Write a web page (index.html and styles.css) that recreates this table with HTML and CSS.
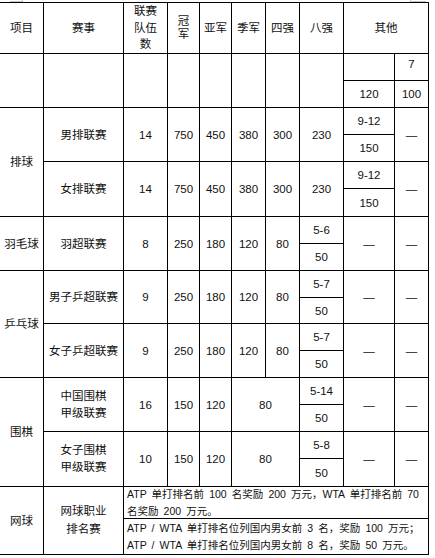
FILE: index.html
```html
<!DOCTYPE html>
<html lang="zh-CN">
<head>
<meta charset="utf-8">
<title>奖励标准</title>
<link rel="stylesheet" href="styles.css">
</head>
<body>
<div class="page">
  <span class="mark mark-tl"></span>
  <span class="mark mark-tr"></span>
  <div class="grid">
    <div class="cell">项目</div>
    <div class="cell">赛事</div>
    <div class="cell ml">联赛<br>队伍<br>数</div>
    <div class="cell tight">冠<br>军</div>
    <div class="cell">亚军</div>
    <div class="cell">季军</div>
    <div class="cell">四强</div>
    <div class="cell">八强</div>
    <div class="cell c2">其他</div>

    <div class="cell r2"></div>
    <div class="cell r2"></div>
    <div class="cell r2"></div>
    <div class="cell r2"></div>
    <div class="cell r2"></div>
    <div class="cell r2"></div>
    <div class="cell r2"></div>
    <div class="cell r2"></div>
    <div class="cell"></div>
    <div class="cell up">7</div>
    <div class="cell">120</div>
    <div class="cell">100</div>

    <div class="cell r4">排球</div>
    <div class="cell r2">男排联赛</div>
    <div class="cell r2">14</div>
    <div class="cell r2">750</div>
    <div class="cell r2">450</div>
    <div class="cell r2">380</div>
    <div class="cell r2">300</div>
    <div class="cell r2">230</div>
    <div class="cell">9-12</div>
    <div class="cell r2">—</div>
    <div class="cell">150</div>

    <div class="cell r2">女排联赛</div>
    <div class="cell r2">14</div>
    <div class="cell r2">750</div>
    <div class="cell r2">450</div>
    <div class="cell r2">380</div>
    <div class="cell r2">300</div>
    <div class="cell r2">230</div>
    <div class="cell">9-12</div>
    <div class="cell r2">—</div>
    <div class="cell">150</div>

    <div class="cell r2">羽毛球</div>
    <div class="cell r2">羽超联赛</div>
    <div class="cell r2">8</div>
    <div class="cell r2">250</div>
    <div class="cell r2">180</div>
    <div class="cell r2">120</div>
    <div class="cell r2">80</div>
    <div class="cell">5-6</div>
    <div class="cell r2">—</div>
    <div class="cell r2">—</div>
    <div class="cell">50</div>

    <div class="cell r4">乒乓球</div>
    <div class="cell r2">男子乒超联赛</div>
    <div class="cell r2">9</div>
    <div class="cell r2">250</div>
    <div class="cell r2">180</div>
    <div class="cell r2">120</div>
    <div class="cell r2">80</div>
    <div class="cell">5-7</div>
    <div class="cell r2">—</div>
    <div class="cell r2">—</div>
    <div class="cell">50</div>

    <div class="cell r2">女子乒超联赛</div>
    <div class="cell r2">9</div>
    <div class="cell r2">250</div>
    <div class="cell r2">180</div>
    <div class="cell r2">120</div>
    <div class="cell r2">80</div>
    <div class="cell">5-7</div>
    <div class="cell r2">—</div>
    <div class="cell r2">—</div>
    <div class="cell">50</div>

    <div class="cell r4">围棋</div>
    <div class="cell r2 ml">中国围棋<br>甲级联赛</div>
    <div class="cell r2">16</div>
    <div class="cell r2">150</div>
    <div class="cell r2">120</div>
    <div class="cell r2 c2">80</div>
    <div class="cell">5-14</div>
    <div class="cell r2">—</div>
    <div class="cell r2">—</div>
    <div class="cell">50</div>

    <div class="cell r2 ml">女子围棋<br>甲级联赛</div>
    <div class="cell r2">10</div>
    <div class="cell r2">150</div>
    <div class="cell r2">120</div>
    <div class="cell r2 c2">80</div>
    <div class="cell">5-8</div>
    <div class="cell r2">—</div>
    <div class="cell r2">—</div>
    <div class="cell">50</div>

    <div class="cell r2">网球</div>
    <div class="cell r2 ml2">网球职业<br>排名赛</div>
    <div class="cell c8 note">ATP 单打排名前 100 名奖励 200 万元，WTA 单打排名前 70<br>名奖励 200 万元。</div>
    <div class="cell c8 note">ATP / WTA 单打排名位列国内男女前 3 名，奖励 100 万元；<br>ATP / WTA 单打排名位列国内男女前 8 名，奖励 50 万元。</div>
  </div>
</div>
</body>
</html>
```
FILE: styles.css
```css
html, body {
  margin: 0;
  padding: 0;
  background: #fff;
}

body {
  font-family: "Liberation Sans", "Noto Sans CJK SC", sans-serif;
  font-size: 11.5px;
  color: #111;
}

.page {
  position: relative;
  padding-top: 2px;
}

.mark {
  position: absolute;
  top: 0;
  border-color: #c4c4c4;
  border-style: solid;
  height: 1px;
}

.mark-tl {
  left: 10px;
  width: 12px;
  border-width: 0 1px 1px 0;
}

.mark-tr {
  left: 410px;
  width: 15px;
  border-width: 0 0 1px 1px;
}

.grid {
  display: grid;
  width: 429px;
  box-sizing: border-box;
  background: #000;
  padding: 1px 1px 1px 0;
  gap: 1px;
  grid-template-columns: 43px 79px 43px 31px 31px 33px 33px 43px 50px 33px;
  grid-template-rows: 50px 26px 26px 26px 26px 26px 27px 26px 26px 26px 25px 26px 26px 26px 26px 26px 27px 31px 35px;
}

.cell {
  background: #fff;
  display: flex;
  align-items: center;
  justify-content: center;
  text-align: center;
  line-height: 14px;
  white-space: nowrap;
}

.r2 { grid-row: span 2; }
.r4 { grid-row: span 4; }
.c2 { grid-column: span 2; }
.c8 { grid-column: span 8; }

.ml { line-height: 16.7px; }
.ml2 { line-height: 17.5px; }
.tight { line-height: 13px; }

.up { align-items: flex-start; padding-top: 3px; }

.note {
  justify-content: flex-start;
  text-align: left;
  padding-left: 3px;
  font-size: 10.5px;
  line-height: 16.7px;
  word-spacing: 2.2px;
}
```
